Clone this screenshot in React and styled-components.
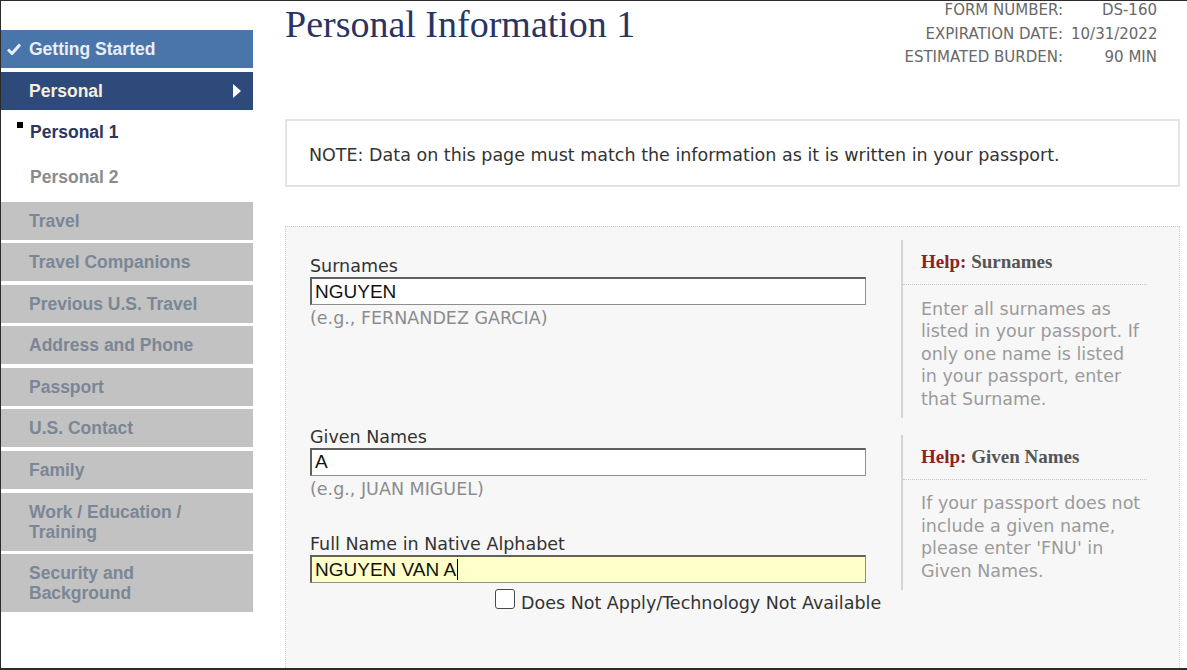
import React from "react";
import styled, { createGlobalStyle } from "styled-components";

const Global = createGlobalStyle`
  html, body { margin: 0; padding: 0; background: #fff; }
  body { font-family: "DejaVu Sans", Verdana, sans-serif; }
  * { box-sizing: border-box; }
`;

const Frame = styled.div`
  width: 1187px;
  height: 670px;
  overflow: hidden;
  background: #fff;
  border-top: 1px solid #2b2b2b;
  border-left: 1px solid #2b2b2b;
  border-bottom: 2px solid #2b2b2b;
  display: flex;
  align-items: flex-start;
`;

/* ---------- Sidebar ---------- */
const Sidebar = styled.nav`
  width: 252px;
  flex: none;
  padding-top: 29px;
  display: flex;
  flex-direction: column;
  font-family: "Liberation Sans", Arial, sans-serif;
  font-weight: bold;
  font-size: 17.5px;
`;

const navColors = {
  done: { bg: "#4a75aa", fg: "#e9eef6" },
  current: { bg: "#2d4a7b", fg: "#f6efdc" },
  locked: { bg: "#c2c2c2", fg: "#7b8696" },
};

const NavItem = styled.div`
  display: flex;
  align-items: center;
  justify-content: ${(p) => (p.$variant === "current" ? "space-between" : "flex-start")};
  min-height: 38px;
  padding: 9px 12px 9px ${(p) => (p.$variant === "done" ? "6px" : "28px")};
  line-height: 20px;
  background: ${(p) => navColors[p.$variant].bg};
  color: ${(p) => navColors[p.$variant].fg};
  margin-bottom: ${(p) => (p.$variant === "current" ? "0" : p.$variant === "done" ? "4px" : "3.6px")};
`;

const CheckIcon = styled.svg`
  width: 14px;
  height: 12px;
  margin-right: 8px;
  flex: none;
`;

const SubList = styled.div`
  display: flex;
  flex-direction: column;
  margin-bottom: 1.5px;
`;

const SubItem = styled.div`
  position: relative;
  height: 45px;
  display: flex;
  align-items: center;
  padding-left: 29px;
  color: ${(p) => (p.$active ? "#2a3761" : "#8b8b8b")};

  &::before {
    content: "";
    display: ${(p) => (p.$active ? "block" : "none")};
    position: absolute;
    left: 16px;
    top: 12px;
    width: 6px;
    height: 6px;
    background: #000;
  }
`;

/* ---------- Main ---------- */
const Main = styled.main`
  width: 895px;
  flex: none;
  margin-left: 32px;
`;

const Header = styled.header`
  display: flex;
  justify-content: space-between;
  align-items: flex-start;
`;

const Title = styled.h1`
  margin: 1px 0 0;
  font-family: "Liberation Serif", "Times New Roman", serif;
  font-weight: normal;
  font-size: 38px;
  line-height: 44px;
  color: #2a3462;
`;

const Meta = styled.dl`
  margin: -2px 23px 0 0;
  display: grid;
  grid-template-columns: auto 86px;
  column-gap: 8px;
  font-size: 15px;
  line-height: 23.5px;
  color: #686868;
`;

const MetaLabel = styled.dt`
  margin: 0;
  text-align: right;
`;

const MetaValue = styled.dd`
  margin: 0;
  text-align: right;
`;

const Note = styled.div`
  margin-top: 49.5px;
  height: 68px;
  border: 2px solid #e4e4e4;
  padding: 3px 22px 0;
  display: flex;
  align-items: center;
  font-size: 17.5px;
  color: #333;
`;

const FormBox = styled.section`
  margin-top: 39px;
  min-height: 520px;
  border: 1px dotted #d3cfb6;
  background: #f7f7f7;
  padding: 13px 32px 40px 24px;
`;

const Row = styled.div`
  display: flex;
  justify-content: space-between;
  align-items: flex-start;
  margin-top: ${(p) => p.$gap || 0}px;
`;

const Fields = styled.div`
  width: 556px;
  padding-top: ${(p) => p.$pad || 0}px;
  display: flex;
  flex-direction: column;
`;

const Label = styled.div`
  font-size: 17.5px;
  line-height: 21px;
  color: #333;
  margin-top: ${(p) => p.$gap || 0}px;
`;

const TextBox = styled.div`
  height: 28px;
  display: flex;
  align-items: center;
  padding: 0 3px;
  border-style: solid;
  border-width: 2px 1px 1px 2px;
  border-color: #606060 #8e8e8e #8e8e8e #606060;
  background: ${(p) => (p.$highlight ? "#ffffca" : "#fff")};
  font-family: "Liberation Sans", Arial, sans-serif;
  font-size: 19px;
  color: #111;
`;

const Caret = styled.span`
  display: inline-block;
  width: 1px;
  height: 21px;
  background: #000;
  margin-left: 1px;
`;

const Hint = styled.div`
  margin-top: 2px;
  font-size: 17.5px;
  line-height: 22px;
  color: #8c8c8c;
`;

const CheckRow = styled.label`
  margin-top: 6px;
  margin-left: 185px;
  display: flex;
  align-items: flex-start;
  gap: 6px;
  font-size: 17.5px;
  line-height: 28px;
  color: #333;
  white-space: nowrap;
`;

const CheckBox = styled.span`
  width: 20px;
  height: 20px;
  flex: none;
  border: 1.5px solid #4a4a4a;
  border-radius: 3px;
  background: #fff;
`;

const HelpPanel = styled.aside`
  width: 246px;
  flex: none;
  border-left: 2px solid #d4d4d4;
  margin-top: ${(p) => p.$gap || 0}px;
`;

const HelpHeading = styled.div`
  padding: 10px 0 10px 18px;
  line-height: 24px;
  border-bottom: 1px dotted #c8c8c8;
  font-family: "Liberation Serif", "Times New Roman", serif;
  font-weight: bold;
  font-size: 19px;
  color: #555;
`;

const HelpKey = styled.span`
  color: #8b2323;
`;

const HelpText = styled.p`
  margin: 0;
  padding: 12.5px 0 7.5px 18px;
  font-size: 17.5px;
  line-height: 22.5px;
  color: #9b9b9b;
  white-space: nowrap;
`;

const sections = [
  "Travel",
  "Travel Companions",
  "Previous U.S. Travel",
  "Address and Phone",
  "Passport",
  "U.S. Contact",
  "Family",
  ["Work / Education /", "Training"],
  ["Security and", "Background"],
];

function Lines({ lines }) {
  return lines.map((l, i) => (
    <React.Fragment key={i}>
      {l}
      {i < lines.length - 1 && <br />}
    </React.Fragment>
  ));
}

export default function App() {
  return (
    <>
      <Global />
      <Frame>
        <Sidebar>
          <NavItem $variant="done">
            <CheckIcon viewBox="0 0 14 12">
              <path d="M1 6.5 L5 10.5 L13 1.5" fill="none" stroke="#e9eef6" strokeWidth="3" strokeLinejoin="round" />
            </CheckIcon>
            Getting Started
          </NavItem>
          <NavItem $variant="current">
            <span>Personal</span>
            <svg width="8" height="14" viewBox="0 0 8 14">
              <path d="M0 0 L8 7 L0 14 Z" fill="#fff" />
            </svg>
          </NavItem>
          <SubList>
            <SubItem $active>Personal 1</SubItem>
            <SubItem>Personal 2</SubItem>
          </SubList>
          {sections.map((s, i) => (
            <NavItem key={i} $variant="locked">
              <span>{Array.isArray(s) ? <Lines lines={s} /> : s}</span>
            </NavItem>
          ))}
        </Sidebar>

        <Main>
          <Header>
            <Title>Personal Information 1</Title>
            <Meta>
              <MetaLabel>FORM NUMBER:</MetaLabel>
              <MetaValue>DS-160</MetaValue>
              <MetaLabel>EXPIRATION DATE:</MetaLabel>
              <MetaValue>10/31/2022</MetaValue>
              <MetaLabel>ESTIMATED BURDEN:</MetaLabel>
              <MetaValue>90 MIN</MetaValue>
            </Meta>
          </Header>

          <Note>NOTE: Data on this page must match the information as it is written in your passport.</Note>

          <FormBox>
            <Row>
              <Fields $pad={16}>
                <Label>Surnames</Label>
                <TextBox>NGUYEN</TextBox>
                <Hint>(e.g., FERNANDEZ GARCIA)</Hint>
              </Fields>
              <HelpPanel>
                <HelpHeading>
                  <HelpKey>Help:</HelpKey> Surnames
                </HelpHeading>
                <HelpText>
                  <Lines
                    lines={[
                      "Enter all surnames as",
                      "listed in your passport. If",
                      "only one name is listed",
                      "in your passport, enter",
                      "that Surname.",
                    ]}
                  />
                </HelpText>
              </HelpPanel>
            </Row>

            <Row $gap={9}>
              <Fields>
                <Label>Given Names</Label>
                <TextBox>A</TextBox>
                <Hint>(e.g., JUAN MIGUEL)</Hint>
                <Label $gap={34.5}>Full Name in Native Alphabet</Label>
                <TextBox $highlight>
                  NGUYEN VAN A<Caret />
                </TextBox>
                <CheckRow>
                  <CheckBox />
                  Does Not Apply/Technology Not Available
                </CheckRow>
              </Fields>
              <HelpPanel $gap={8}>
                <HelpHeading>
                  <HelpKey>Help:</HelpKey> Given Names
                </HelpHeading>
                <HelpText>
                  <Lines
                    lines={[
                      "If your passport does not",
                      "include a given name,",
                      "please enter 'FNU' in",
                      "Given Names.",
                    ]}
                  />
                </HelpText>
              </HelpPanel>
            </Row>
          </FormBox>
        </Main>
      </Frame>
    </>
  );
}
